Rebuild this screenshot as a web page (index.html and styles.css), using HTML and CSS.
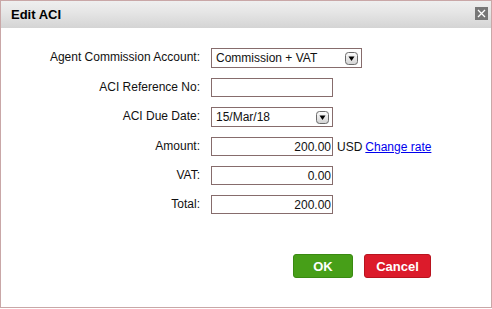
FILE: index.html
```html
<!DOCTYPE html>
<html>
<head>
  <title>Edit ACI</title>
  <link rel="stylesheet" href="styles.css">
</head>
<body>
  <div class="dialog">
    <div class="titlebar">
      <span class="title">Edit ACI</span>
      <span class="close">
        <svg width="13" height="13" viewBox="0 0 13 13">
          <path d="M3 3 L10 10 M10 3 L3 10" stroke="#fff" stroke-width="1.3" fill="none"/>
        </svg>
      </span>
    </div>
    <form class="fields">
      <label class="lbl">Agent Commission Account:</label>
      <div class="select wide">
        <span>Commission + VAT</span>
        <svg class="arrow" width="13" height="13" viewBox="0 0 13 13">
          <defs>
            <linearGradient id="ag" x1="0" y1="0" x2="0" y2="1">
              <stop offset="0" stop-color="#fdfdfd"/>
              <stop offset="1" stop-color="#d2d2d2"/>
            </linearGradient>
          </defs>
          <rect x="0.5" y="0.5" width="12" height="12" rx="3" fill="url(#ag)" stroke="#6a6a6a"/>
          <path d="M3.5 4.5 L9.5 4.5 L6.5 9 Z" fill="#000"/>
        </svg>
      </div>

      <label class="lbl">ACI Reference No:</label>
      <div class="field"><input class="text" type="text"></div>

      <label class="lbl">ACI Due Date:</label>
      <div class="select">
        <span>15/Mar/18</span>
        <svg class="arrow" width="13" height="13" viewBox="0 0 13 13">
          <rect x="0.5" y="0.5" width="12" height="12" rx="3" fill="url(#ag)" stroke="#6a6a6a"/>
          <path d="M3.5 4.5 L9.5 4.5 L6.5 9 Z" fill="#000"/>
        </svg>
      </div>

      <label class="lbl">Amount:</label>
      <div class="field">
        <input class="text num" type="text" value="200.00">
        <span class="cur">USD</span>
        <a href="#" class="rate">Change rate</a>
      </div>

      <label class="lbl">VAT:</label>
      <div class="field"><input class="text num" type="text" value="0.00"></div>

      <label class="lbl">Total:</label>
      <div class="field"><input class="text num" type="text" value="200.00"></div>
    </form>
    <div class="buttons">
      <button class="btn ok" type="button">OK</button>
      <button class="btn cancel" type="button">Cancel</button>
    </div>
  </div>
</body>
</html>
```

FILE: styles.css
```css
body {
  margin: 0;
  font-family: "Liberation Sans", Arial, sans-serif;
  font-size: 12px;
  color: #111;
  background: #fff;
}
.dialog {
  width: 492px;
  height: 308px;
  box-sizing: border-box;
  border: 1px solid #c9a7a7;
  background: #fff;
}
.titlebar {
  height: 27px;
  display: flex;
  align-items: center;
  justify-content: space-between;
  padding: 0 3px 0 10px;
  background: linear-gradient(#efefef, #e6e6e6 40%, #d4d4d4);
}
.title {
  font-weight: bold;
  font-size: 13px;
  color: #000;
  margin-top: -1px;
}
.close {
  width: 13px;
  height: 13px;
  background: #777;
  display: flex;
  margin-top: -2px;
}
.fields {
  display: grid;
  grid-template-columns: 199px auto;
  column-gap: 11px;
  row-gap: 10px;
  margin: 19px 0 0 0;
  align-items: center;
}
.lbl {
  text-align: right;
  margin-top: -2px;
}
.field {
  display: flex;
  align-items: center;
}
.text {
  width: 122px;
  height: 19px;
  box-sizing: border-box;
  border: 1px solid #866c6c;
  padding: 0 1px;
  margin: 0;
  font-family: "Liberation Sans", Arial, sans-serif;
  font-size: 12px;
  color: #111;
}
.num {
  text-align: right;
}
.cur {
  margin-left: 4px;
}
.rate {
  margin-left: 3px;
  color: #0000ee;
}
.select {
  width: 122px;
  height: 20px;
  box-sizing: border-box;
  border: 1px solid #866c6c;
  display: flex;
  align-items: center;
  justify-content: space-between;
  padding: 0 3px 0 4px;
}
.select.wide {
  width: 151px;
  margin-top: 1px;
}
.arrow {
  flex: none;
}
.buttons {
  display: flex;
  justify-content: flex-end;
  gap: 11px;
  margin: 40px 60px 0 0;
}
.btn {
  height: 24px;
  border-radius: 3px;
  color: #fff;
  font-family: "Liberation Sans", Arial, sans-serif;
  font-weight: bold;
  font-size: 13px;
  padding: 0;
  cursor: pointer;
}
.ok {
  width: 60px;
  background: #479f18;
  border: 1px solid #3a8a12;
}
.cancel {
  width: 67px;
  background: #dc1b2b;
  border: 1px solid #b8141f;
}
```
